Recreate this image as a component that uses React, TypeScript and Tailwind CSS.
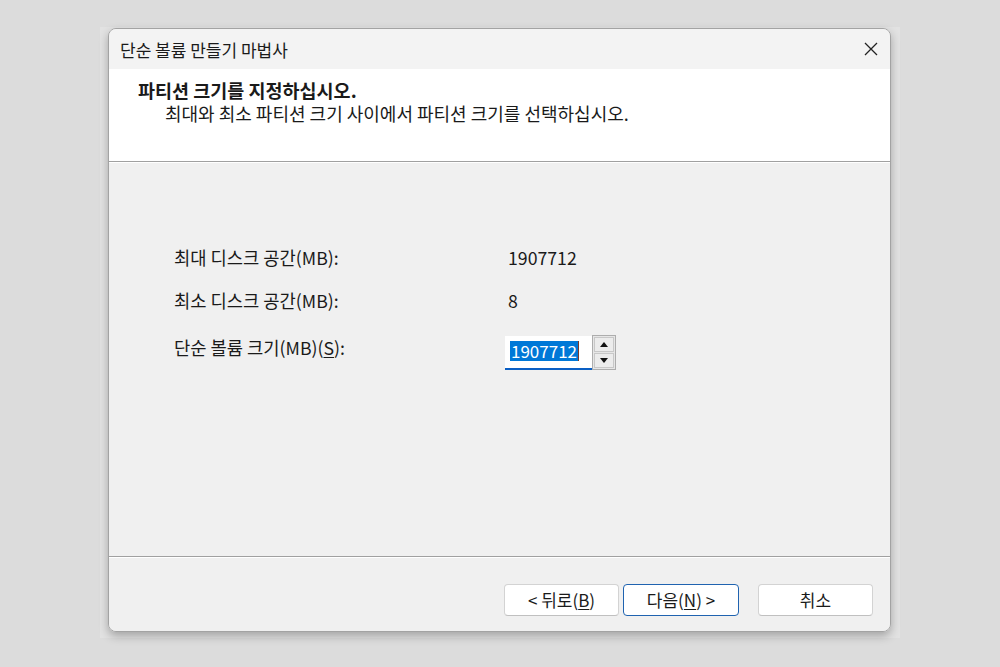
export default function App() {
  const font = { fontFamily: '"Noto Sans CJK KR", "Noto Sans", sans-serif' };
  return (
    <div className="w-[1000px] h-[667px] bg-[#dcdcdc] pt-[27px] pl-[100px]" style={font}>
      <div className="w-[800px] h-[611px] bg-[#e2e2e2] pl-[8px] pt-[1px]">
        <div className="w-[783px] h-[604px] rounded-[8px] border border-[#a3a3a3] overflow-hidden flex flex-col shadow-[0_4px_10px_rgba(0,0,0,0.28)] text-[#1a1a1a]">
          <div className="h-[40px] bg-[#f3f3f3] flex items-center justify-between pl-[11px] pr-[10px] shrink-0">
            <span className="text-[17px] leading-none">단순 볼륨 만들기 마법사</span>
            <svg width="16" height="16" viewBox="0 0 16 16" className="mr-[1px]">
              <path d="M2 2 L14 14 M14 2 L2 14" stroke="#222" strokeWidth="1.3" fill="none" />
            </svg>
          </div>
          <div className="h-[92px] bg-white pl-[29px] pt-[10px] shrink-0">
            <div className="text-[18.5px] font-bold leading-[23px]">파티션 크기를 지정하십시오.</div>
            <div className="text-[18px] leading-[22px] pl-[27px]">최대와 최소 파티션 크기 사이에서 파티션 크기를 선택하십시오.</div>
          </div>
          <div className="h-[2px] border-t border-[#a0a0a0] border-b-white border-b shrink-0" />
          <div className="flex-1 bg-[#f0f0f0] pl-[65px] pt-[82px] text-[17.7px]">
            <div className="grid grid-cols-[334px_1fr] items-start">
              <div className="h-[24px] leading-[24px]">최대 디스크 공간(MB):</div>
              <div className="h-[24px] leading-[24px]">1907712</div>
              <div className="h-[24px] leading-[24px] mt-[19px]">최소 디스크 공간(MB):</div>
              <div className="h-[24px] leading-[24px] mt-[19px]">8</div>
              <div className="h-[24px] leading-[24px] mt-[23px]">
                단순 볼륨 크기(MB)(<span className="underline underline-offset-2">S</span>):
              </div>
              <div className="mt-[23px] -ml-[3px] flex items-center">
                <div className="w-[87px] h-[34px] bg-white border-b-[2px] border-[#0a5fc4] flex items-center pl-[5px] pb-[2px] text-[17px]">
                  <span className="bg-[#0078d7] text-white leading-[20px] px-[1px]">1907712</span>
                  <span className="w-[1px] h-[20px] bg-[#7a3a2a]" />
                </div>
                <div className="w-[24px] h-[35px] border border-[#adadad] bg-[#e6e6e6] flex flex-col p-[1px] gap-[1px]">
                  <div className="flex-1 border border-[#c8c8c8] bg-[#ececec] flex items-center justify-center">
                    <svg width="8" height="5" viewBox="0 0 8 5"><path d="M0 5 L4 0 L8 5 Z" fill="#111" /></svg>
                  </div>
                  <div className="flex-1 border border-[#c8c8c8] bg-[#ececec] flex items-center justify-center">
                    <svg width="8" height="5" viewBox="0 0 8 5"><path d="M0 0 L4 5 L8 0 Z" fill="#111" /></svg>
                  </div>
                </div>
              </div>
            </div>
          </div>
          <div className="h-[2px] border-t border-[#a0a0a0] border-b-white border-b shrink-0" />
          <div className="h-[73px] bg-[#f0f0f0] flex justify-end items-start pt-[26px] pr-[17px] text-[17px] shrink-0">
            <button className="w-[115px] h-[32px] bg-white border border-[#d3d3d3] border-b-[#c0c0c0] rounded-[4px]">
              &lt; 뒤로(<span className="underline underline-offset-2">B</span>)
            </button>
            <button className="w-[116px] h-[32px] ml-[4px] bg-white border border-[#1f63b0] rounded-[4px]">
              다음(<span className="underline underline-offset-2">N</span>) &gt;
            </button>
            <button className="w-[115px] h-[32px] ml-[19px] bg-white border border-[#d3d3d3] border-b-[#c0c0c0] rounded-[4px]">
              취소
            </button>
          </div>
        </div>
      </div>
    </div>
  );
}
